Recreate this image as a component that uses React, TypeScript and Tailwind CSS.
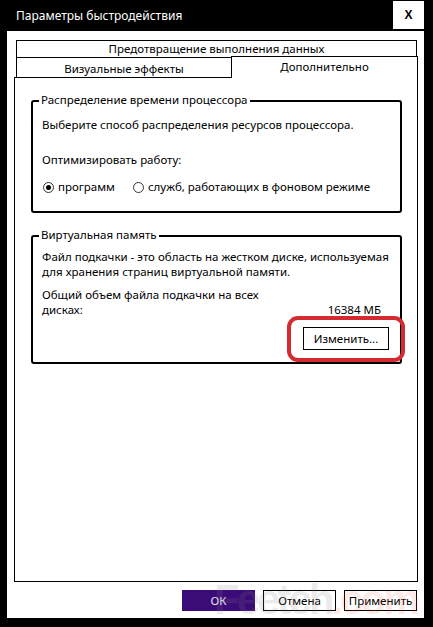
import React from 'react'

const Radio: React.FC<{ checked?: boolean }> = ({ checked }) => (
  <span className="w-[11px] h-[11px] rounded-full border border-[#333] bg-white flex items-center justify-center shrink-0">
    {checked && <span className="w-[5px] h-[5px] rounded-full bg-black" />}
  </span>
)

const GroupBox: React.FC<{ title: string; className?: string; children: React.ReactNode }> = ({
  title,
  className,
  children,
}) => (
  <div className={`relative border-2 border-black rounded-[3px] ${className ?? ''}`}>
    <span className="absolute -top-[10px] left-[6px] bg-white px-[2px] leading-[16px]">{title}</span>
    {children}
  </div>
)

const DialogButton: React.FC<{ label: string; primary?: boolean }> = ({ label, primary }) => (
  <div
    className={
      primary
        ? 'w-[73px] h-[21px] bg-[#3b0b78] text-[#e8e4f0] flex items-center justify-center'
        : 'w-[73px] h-[21px] bg-white border border-black flex items-center justify-center'
    }
  >
    {label}
  </div>
)

export default function App() {
  return (
    <div className="relative w-[433px] h-[627px] bg-black flex flex-col pl-[7px] pr-[9px] pb-[9px] overflow-hidden font-['Noto_Sans',sans-serif] text-[11.5px] text-black">
      {/* title bar */}
      <div className="h-[31px] flex items-start justify-between">
        <span className="text-white text-[12px] leading-[18px] mt-[7px] ml-[9px]">Параметры быстродействия</span>
        <div className="w-[31px] h-[28px] mt-[1px] bg-white flex items-center justify-center font-['Liberation_Sans',sans-serif] font-bold text-[12px]">
          X
        </div>
      </div>

      <div className="flex-1 bg-white flex flex-col pt-[9px] pl-[7px] pr-[6px] pb-[7px]">
        {/* tabs */}
        <div className="ml-[2px] mr-[1px] h-[18px] border border-black flex items-center justify-center leading-[16px]">
          Предотвращение выполнения данных
        </div>
        <div className="relative z-10 h-[19px] flex items-start ml-[2px]">
          <div className="w-[215px] h-full border-l border-black flex items-center justify-center leading-[16px] pt-[2px]">
            Визуальные эффекты
          </div>
          <div className="flex-1 h-[22px] -mt-[2px] border border-b-0 border-black bg-white flex items-center justify-center leading-[16px] pb-[2px]">
            Дополнительно
          </div>
        </div>

        {/* panel */}
        <div className="flex-1 border border-black pt-[22px] pl-[16px] pr-[15px]">
          <GroupBox title="Распределение времени процессора" className="h-[113px] pl-[9px] pt-[15px]">
            <div className="leading-[16px]">Выберите способ распределения ресурсов процессора.</div>
            <div className="leading-[16px] mt-[19px]">Оптимизировать работу:</div>
            <div className="flex items-center mt-[11px] leading-[16px]">
              <span className="ml-[1px]"><Radio checked /></span>
              <span className="ml-[4px]">программ</span>
              <span className="ml-[18px]"><Radio /></span>
              <span className="ml-[4px]">служб, работающих в фоновом режиме</span>
            </div>
          </GroupBox>

          <GroupBox title="Виртуальная память" className="mt-[22px] h-[129px] pl-[9px] pt-[12px] pr-[11px]">
            <div className="leading-[15px] whitespace-nowrap">
              Файл подкачки - это область на жестком диске, используемая
              <br />
              для хранения страниц виртуальной памяти.
            </div>
            <div className="flex items-end justify-between mt-[8px] leading-[15px]">
              <div className="whitespace-nowrap">
                Общий объем файла подкачки на всех
                <br />
                дисках:
              </div>
              <div className="mr-[8px]">16384 МБ</div>
            </div>
            <div className="flex justify-end mt-[10px]">
              <div className="relative w-[86px] h-[23px] border border-black flex items-center justify-center">
                Изменить...
                <div className="absolute -left-[17px] -top-[12px] w-[118px] h-[46px] border-[4px] border-[#d42a30] rounded-[11px]" />
              </div>
            </div>
          </GroupBox>
        </div>

        {/* dialog buttons */}
        <div className="flex justify-end gap-[8px] mt-[8px] pr-[1px]">
          <DialogButton label="ОК" primary />
          <DialogButton label="Отмена" />
          <DialogButton label="Применить" />
        </div>
      </div>

      {/* watermark */}
      <div className="pointer-events-none absolute left-[214px] top-[574px] font-['Liberation_Sans',sans-serif] font-bold text-[42px] leading-[52px] tracking-[-3px] whitespace-nowrap">
        <span className="text-[rgba(130,130,130,0.16)]">Feetch</span>
        <span className="text-[rgba(235,90,70,0.12)]">.com</span>
      </div>
    </div>
  )
}
